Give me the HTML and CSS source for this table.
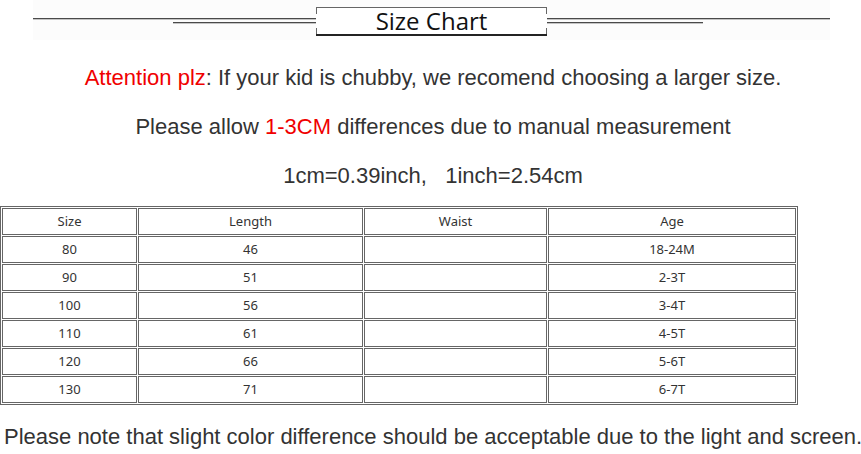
FILE: index.html
```html
<!DOCTYPE html>
<html lang="en">
<head>
<meta charset="utf-8">
<title>Size Chart</title>
<link rel="stylesheet" href="styles.css">
</head>
<body>
<header class="banner">
  <div class="side side-left">
    <div class="rule-long"></div>
    <div class="rule-short"></div>
  </div>
  <div class="title-box"><h1 class="title">Size Chart</h1></div>
  <div class="side side-right">
    <div class="rule-long"></div>
    <div class="rule-short"></div>
  </div>
</header>

<p class="note note-first"><span class="red">Attention plz</span>: If your kid is chubby, we recomend choosing a larger size.</p>
<p class="note">Please allow <span class="red">1-3CM</span> differences due to manual measurement</p>
<p class="note">1cm=0.39inch,&nbsp;&nbsp; 1inch=2.54cm</p>

<table class="chart">
  <thead>
    <tr><th class="c-size">Size</th><th class="c-len">Length</th><th class="c-waist">Waist</th><th class="c-age">Age</th></tr>
  </thead>
  <tbody>
    <tr><td>80</td><td>46</td><td></td><td>18-24M</td></tr>
    <tr><td>90</td><td>51</td><td></td><td>2-3T</td></tr>
    <tr><td>100</td><td>56</td><td></td><td>3-4T</td></tr>
    <tr><td>110</td><td>61</td><td></td><td>4-5T</td></tr>
    <tr><td>120</td><td>66</td><td></td><td>5-6T</td></tr>
    <tr><td>130</td><td>71</td><td></td><td>6-7T</td></tr>
  </tbody>
</table>

<p class="footer-note">Please note that slight color difference should be acceptable due to the light and screen.</p>
</body>
</html>
```
FILE: styles.css
```css
html, body {
  margin: 0;
  padding: 0;
  background: #ffffff;
}
body {
  width: 861px;
  height: 454px;
  overflow: hidden;
  font-family: "Liberation Sans", Arial, sans-serif;
  color: #333333;
}

/* ---------- banner ---------- */
.banner {
  display: flex;
  align-items: flex-start;
  height: 40px;
  box-sizing: border-box;
  padding-top: 7px;
  margin: 0 31px 0 33px;
  background: #fcfcfc;
}
.side {
  flex: 1;
  display: flex;
  flex-direction: column;
}
.rule-long {
  margin-top: 11px;
  height: 1px;
  background: #4a4a4a;
  box-shadow: 0 1px 0 #c4c4c4;
}
.rule-short {
  margin-top: 3px;
  height: 1px;
  background: #4a4a4a;
  box-shadow: 0 1px 0 #c4c4c4;
}
.side-left .rule-short { margin-left: 140px; }
.side-right .rule-short { margin-right: 127px; }

.title-box {
  width: 231px;
  height: 29px;
  box-sizing: border-box;
  border-top: 1px solid #666666;
  border-bottom: 2px solid #222222;
  background:
    linear-gradient(#666, #666) left top / 1px 6px no-repeat,
    linear-gradient(#666, #666) right top / 1px 6px no-repeat,
    linear-gradient(#666, #666) left bottom / 1px 6px no-repeat,
    linear-gradient(#666, #666) right bottom / 1px 6px no-repeat,
    #ffffff;
  display: flex;
  justify-content: center;
  align-items: center;
}
.title {
  margin: 0;
  font-family: "Open Sans", "Liberation Sans", sans-serif;
  font-weight: 400;
  font-size: 24px;
  line-height: 26px;
  color: #111111;
}

/* ---------- notes ---------- */
.note {
  margin: 23px 0 0 0;
  padding-left: 5px;
  text-align: center;
  font-size: 22px;
  line-height: 26px;
  white-space: nowrap;
}
.note-first { margin-top: 25px; }
.red { color: #f00000; }

/* ---------- table ---------- */
.chart {
  margin-top: 17px;
  border: 1px solid #666666;
  border-spacing: 1px;
  table-layout: fixed;
  font-family: "Noto Sans", "Open Sans", sans-serif;
  font-size: 13px;
  color: #333333;
}
.chart th,
.chart td {
  border: 1px solid #666666;
  padding: 0 0 2px 0;
  height: 23px;
  line-height: 22px;
  text-align: center;
  font-weight: 400;
}
.c-size { width: 133px; }
.c-len { width: 223px; }
.c-waist { width: 181px; }
.c-age { width: 246px; }

/* ---------- footer ---------- */
.footer-note {
  margin: 19px 0 0 0;
  padding-left: 4px;
  text-align: center;
  font-size: 22px;
  line-height: 26px;
  white-space: nowrap;
}
```
